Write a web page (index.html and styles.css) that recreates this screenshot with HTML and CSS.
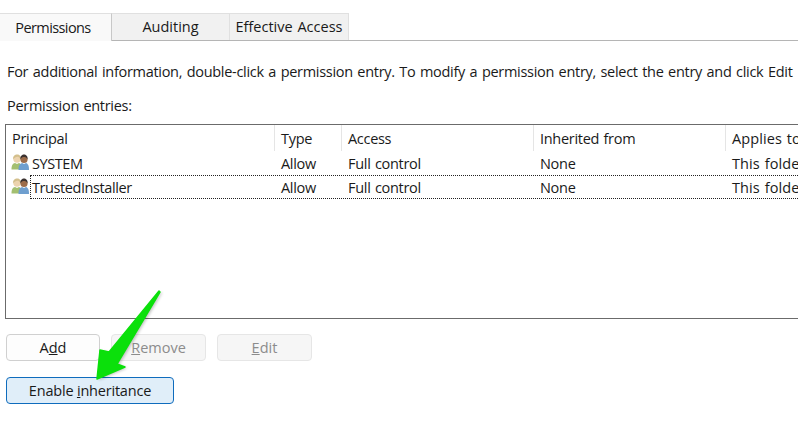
FILE: index.html
```html
<!DOCTYPE html>
<html>
<head>
    <title>Permissions</title>
    <link rel="stylesheet" href="styles.css">
</head>
<body>
    <svg class="defs" width="0" height="0">
        <symbol id="users" viewBox="0 0 18 16">
            <path d="M0.500 15.500c0-4.500 1.500-6 3.500-6.500l2 1 2-1c1.500 0.500 2.500 1.500 3 3v3.500z" fill="#a3bf70"/>
            <circle cx="6" cy="5" r="3.700" fill="#ecd3ae"/>
            <path d="M2.300 5.500c-0.700-3.500 1.500-5 3.900-5s4 1.500 3.400 5c-1-2.300-2.200-2.800-3.400-2.800s-2.900 1-3.900 2.800z" fill="#d3bf8c"/>
            <path d="M7.500 16c0-4.500 1-6 3.500-7l2 1 2-1c2 0.800 3 2.500 3 7z" fill="#6f9fcf"/>
            <circle cx="13" cy="5.500" r="3.600" fill="#9c6c4a"/>
            <path d="M9.400 5.200c-0.300-3.200 1.700-4.700 3.600-4.700s3.900 1.500 3.600 4.700c-1-1.600-2.200-2.200-3.600-2.200s-2.600 0.600-3.600 2.200z" fill="#3b3230"/>
        </symbol>
    </svg>

    <div class="tabs">
        <div class="tab active">Permissions</div>
        <div class="tab auditing">Auditing</div>
        <div class="tab effective">Effective Access</div>
    </div>

    <div class="content">
        <p class="info">For additional information, double-click a permission entry. To modify a permission entry, select the entry and click Edit</p>
        <p class="label">Permission entries:</p>

        <div class="list">
            <div class="row head">
                <div class="cell">Principal</div>
                <div class="cell">Type</div>
                <div class="cell">Access</div>
                <div class="cell">Inherited from</div>
                <div class="cell applies">Applies to</div>
            </div>
            <div class="row">
                <div class="cell principal"><svg class="user-icon"><use href="#users"/></svg><span class="name">SYSTEM</span></div>
                <div class="cell">Allow</div>
                <div class="cell">Full control</div>
                <div class="cell">None</div>
                <div class="cell applies">This folder, subfolders and files</div>
            </div>
            <div class="row">
                <div class="cell principal"><svg class="user-icon"><use href="#users"/></svg><span class="name">TrustedInstaller</span></div>
                <div class="cell">Allow</div>
                <div class="cell">Full control</div>
                <div class="cell">None</div>
                <div class="cell applies">This folder, subfolders and files</div>
                <div class="focus"></div>
            </div>
        </div>

        <div class="buttons">
            <button class="btn">A<u>d</u>d</button>
            <button class="btn off"><u>R</u>emove</button>
            <button class="btn off"><u>E</u>dit</button>
        </div>
        <button class="btn enable">Enable <u>i</u>nheritance</button>
    </div>

    <!-- green annotation arrow on top of the dialog -->
    <svg class="arrow" width="798" height="421" viewBox="0 0 798 421">
        <polygon class="arrow-shadow" points="159,291 109,352 100,350 97,379 125,367 117,364 160,292"/>
        <polygon class="arrow-fill" points="159,291 109,352 100,350 97,379 125,367 117,364 160,292"/>
    </svg>
</body>
</html>
```

FILE: styles.css
```css
html, body {
    margin: 0;
    height: 421px;
    overflow: hidden;
}
body {
    position: relative;
    width: 798px;
    background: #fff;
    color: #1a1a1a;
    font-family: "Open Sans", "Noto Sans", sans-serif;
    font-size: 14.5px;
    letter-spacing: -0.3px;
    word-spacing: 1px;
}
.defs {
    position: absolute;
}
.tabs {
    display: flex;
    box-sizing: border-box;
    height: 28px;
    margin-top: 13px;
    border-bottom: 1px solid #b5b5b5;
}
.tab {
    box-sizing: border-box;
    height: 27px;
    background: #f1f1f1;
    border: 1px solid #e0e0e0;
    border-bottom: none;
    border-left: none;
    text-align: center;
    line-height: 26px;
    letter-spacing: 0;
}
.tab.active {
    width: 112px;
    height: 28px;
    padding-right: 5px;
    background: #f9f9f9;
    border-right: 1px solid #c8c8c8;
    line-height: 28px;
    letter-spacing: -0.6px;
}
.auditing {
    width: 118px;
}
.effective {
    width: 119px;
}
.content {
    padding: 0 0 0 6px;
}
.info {
    margin: 0;
    padding: 21px 0 0 1px;
    line-height: 20px;
    white-space: nowrap;
    word-spacing: 1.1px;
}
.label {
    margin: 0;
    padding: 14px 0 0 1px;
    line-height: 20px;
}
.list {
    position: relative;
    box-sizing: border-box;
    width: 900px;
    height: 195px;
    margin: 8px 0 0 -1px;
    border: 1px solid #6b6b6b;
}
.row {
    display: grid;
    grid-template-columns: 269px 67px 192px 192px 200px;
    height: 24px;
    line-height: 25px;
}
.row.head {
    height: 26px;
    line-height: 27px;
}
.cell {
    padding-left: 6px;
    white-space: nowrap;
    overflow: hidden;
}
.head .cell {
    border-right: 1px solid #e5e5e5;
}
.applies {
    letter-spacing: 0.1px;
}
.principal {
    display: flex;
    align-items: center;
    gap: 3px;
    padding-left: 5px;
}
.name {
    letter-spacing: -0.42px;
}
.user-icon {
    width: 18px;
    height: 16px;
    margin-top: -3px;
    flex: none;
}
/* dotted selection box round the focused row */
.focus {
    position: absolute;
    left: 24px;
    right: -2px;
    top: 50px;
    height: 24px;
    border: 1px dotted #222;
    box-sizing: border-box;
}
.buttons {
    display: flex;
    gap: 11px;
    margin-top: 15px;
}
.btn {
    display: block;
    box-sizing: border-box;
    width: 95px;
    height: 27px;
    padding: 0;
    background: #fdfdfd;
    border: 1px solid #d0d0d0;
    border-radius: 4px;
    color: #1a1a1a;
    font: inherit;
    letter-spacing: 0;
}
.btn:first-child {
    width: 94px;
}
.btn.off {
    background: #f6f6f6;
    border-color: #e6e6e6;
    color: #8c8c8c;
}
.btn.enable {
    width: 168px;
    margin-top: 16px;
    background: #e0eef9;
    border-color: #0f6cbd;
    letter-spacing: -0.2px;
}
.arrow {
    position: absolute;
    left: 0;
    top: 0;
    pointer-events: none;
}
.arrow-fill {
    fill: #0be00b;
    stroke: #0be00b;
    stroke-width: 1.5;
    stroke-linejoin: round;
}
.arrow-shadow {
    fill: #000;
    opacity: 0.25;
    transform: translate(2px, 1px);
    filter: blur(1.5px);
}
```
